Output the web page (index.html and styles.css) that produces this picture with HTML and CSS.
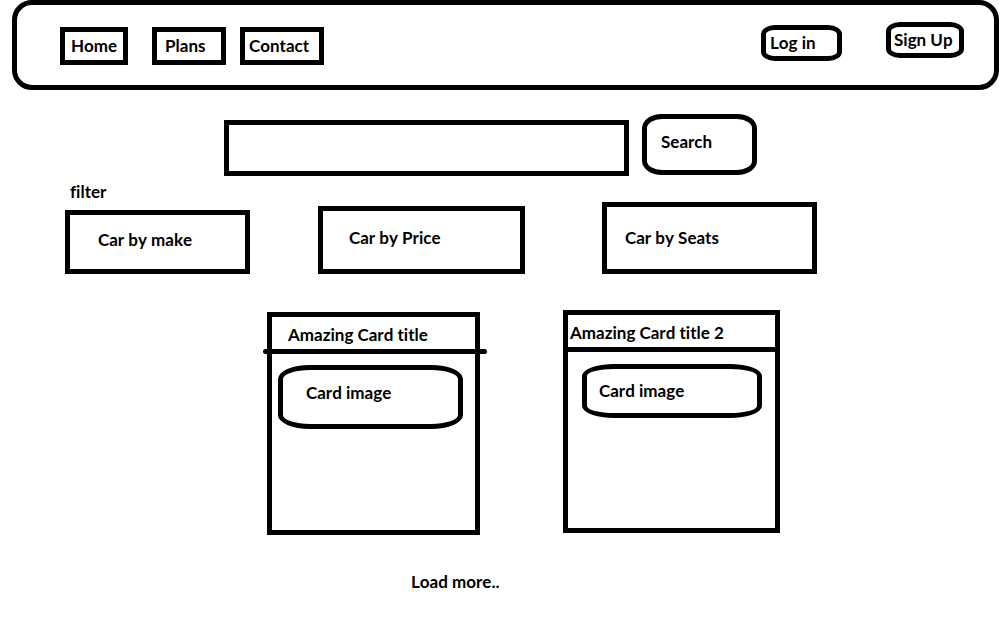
FILE: index.html
```html
<!DOCTYPE html>
<html lang="en">
<head>
<meta charset="utf-8">
<meta name="viewport" content="width=device-width, initial-scale=1">
<title>Car listings</title>
<link rel="stylesheet" href="styles.css">
</head>
<body>
<header class="site-header">
  <nav class="nav" aria-label="Main">
    <a class="nav-link nav-home" href="#">Home</a>
    <a class="nav-link nav-plans" href="#">Plans</a>
    <a class="nav-link nav-contact" href="#">Contact</a>
  </nav>
  <div class="account">
    <button class="account-button login" type="button">Log in</button>
    <button class="account-button signup" type="button">Sign Up</button>
  </div>
</header>
<main>
  <form class="search" role="search">
    <input class="search-input" type="search" aria-label="Search cars">
    <button class="search-button" type="button">Search</button>
  </form>
  <section class="filters" aria-labelledby="filter-label">
    <div class="filter-group filter-make">
      <h2 class="filter-label" id="filter-label">filter</h2>
      <button class="filter" type="button">Car by make</button>
    </div>
    <div class="filter-group filter-price">
      <button class="filter" type="button">Car by Price</button>
    </div>
    <div class="filter-group filter-seats">
      <button class="filter" type="button">Car by Seats</button>
    </div>
  </section>
  <section class="cards" aria-label="Results">
    <article class="card card-first">
      <h3 class="card-title">Amazing Card title</h3>
      <div class="card-rule"></div>
      <div class="card-image">Card image</div>
    </article>
    <article class="card card-second">
      <h3 class="card-title">Amazing Card title 2</h3>
      <div class="card-rule"></div>
      <div class="card-image">Card image</div>
    </article>
  </section>
  <div class="more">
    <button class="load-more" type="button">Load more..</button>
  </div>
</main>
</body>
</html>
```

FILE: styles.css
```css
* {
  box-sizing: border-box;
}

body {
  margin: 0;
  background: #fff;
  color: #000;
  font: bold 17px/22px Lato, "Liberation Sans", sans-serif;
  font-kerning: none;
  font-variant-ligatures: none;
}

button,
input {
  margin: 0;
  background: #fff;
  color: inherit;
  font: inherit;
  font-kerning: none;
  font-variant-ligatures: none;
  text-align: left;
}

h2,
h3 {
  margin: 0;
  font-size: inherit;
  font-weight: inherit;
}

/* Header */
.site-header {
  display: flex;
  justify-content: space-between;
  min-height: 90px;
  margin: 0 9px 0 12px;
  padding: 17px 30px 17px 43px;
  border: 5px solid #000;
  border-radius: 20px;
}

.nav {
  display: flex;
  align-items: flex-start;
  padding-top: 5px;
}

.nav-link {
  height: 38px;
  padding: 3px 6px;
  border: 5px solid #000;
  color: inherit;
  text-decoration: none;
}

.nav-home {
  width: 68px;
}

.nav-plans {
  width: 74px;
  margin-left: 24px;
  padding-left: 8px;
}

.nav-contact {
  width: 84px;
  margin-left: 14px;
  padding-left: 4px;
}

.account {
  display: flex;
  align-items: flex-start;
  gap: 44px;
}

.account-button {
  height: 36px;
  padding: 0 3px 1px;
  border: 5px solid #000;
  border-radius: 14px / 9px;
  white-space: nowrap;
}

.login {
  width: 81px;
  margin-top: 3px;
  padding-left: 4px;
}

.signup {
  width: 78px;
}

/* Search */
.search {
  display: flex;
  align-items: flex-start;
  gap: 13px;
  margin: 24px 251px 0 224px;
}

.search-input {
  flex: 1;
  min-width: 0;
  height: 56px;
  margin-top: 6px;
  padding: 0 12px;
  border: 5px solid #000;
  border-radius: 0;
  appearance: none;
}

.search-button {
  width: 115px;
  height: 61px;
  padding: 0 14px 6px;
  border: 5px solid #000;
  border-radius: 20px / 14px;
}

/* Filters */
.filters {
  display: flex;
  align-items: flex-end;
  margin: 5px 191px 0 65px;
}

.filter-group {
  flex: 185 1 0;
}

.filter-label {
  margin-bottom: 7px;
  padding-left: 5px;
}

.filter {
  display: block;
  width: 100%;
  height: 64px;
  padding: 0 0 4px 28px;
  border: 5px solid #000;
}

.filter-price {
  flex-grow: 207;
  margin-left: 68px;
}

.filter-price .filter {
  height: 68px;
  padding-left: 26px;
}

.filter-seats {
  flex-grow: 215;
  margin-left: 77px;
}

.filter-seats .filter {
  height: 72px;
  padding: 0 0 0 18px;
}

/* Result cards */
.cards {
  display: grid;
  grid-template-columns: 213fr 217fr;
  align-items: start;
  gap: 83px;
  margin: 36px 228px 0 267px;
}

.card {
  min-height: 223px;
  border: 5px solid #000;
}

.card-first {
  margin-top: 2px;
}

.card-title {
  padding: 7px 0 3px;
  white-space: nowrap;
}

.card-rule {
  height: 5px;
  background: #000;
}

.card-image {
  border: 5px solid #000;
}

.card-first .card-title {
  padding-left: 16px;
}

.card-first .card-rule {
  margin: 0 -12px 0 -9px;
  border-radius: 3px;
}

.card-first .card-image {
  height: 64px;
  margin: 11px 12px 0 6px;
  padding: 12px 23px;
  border-radius: 32px / 14px;
}

.card-second .card-title {
  padding-left: 2px;
}

.card-second .card-image {
  height: 54px;
  margin: 12px 13px 0 14px;
  padding: 11px 12px;
  border-radius: 32px / 12px;
}

.more {
  margin: 36px 0 24px 411px;
}

.load-more {
  padding: 0;
  border: 0;
}

@media (max-width: 860px) {
  .search,
  .filters,
  .cards {
    margin-right: 24px;
    margin-left: 24px;
  }

  .filter-price,
  .filter-seats {
    margin-left: 24px;
  }

  .cards {
    gap: 32px;
  }

  .more {
    margin-left: 24px;
  }
}
```
